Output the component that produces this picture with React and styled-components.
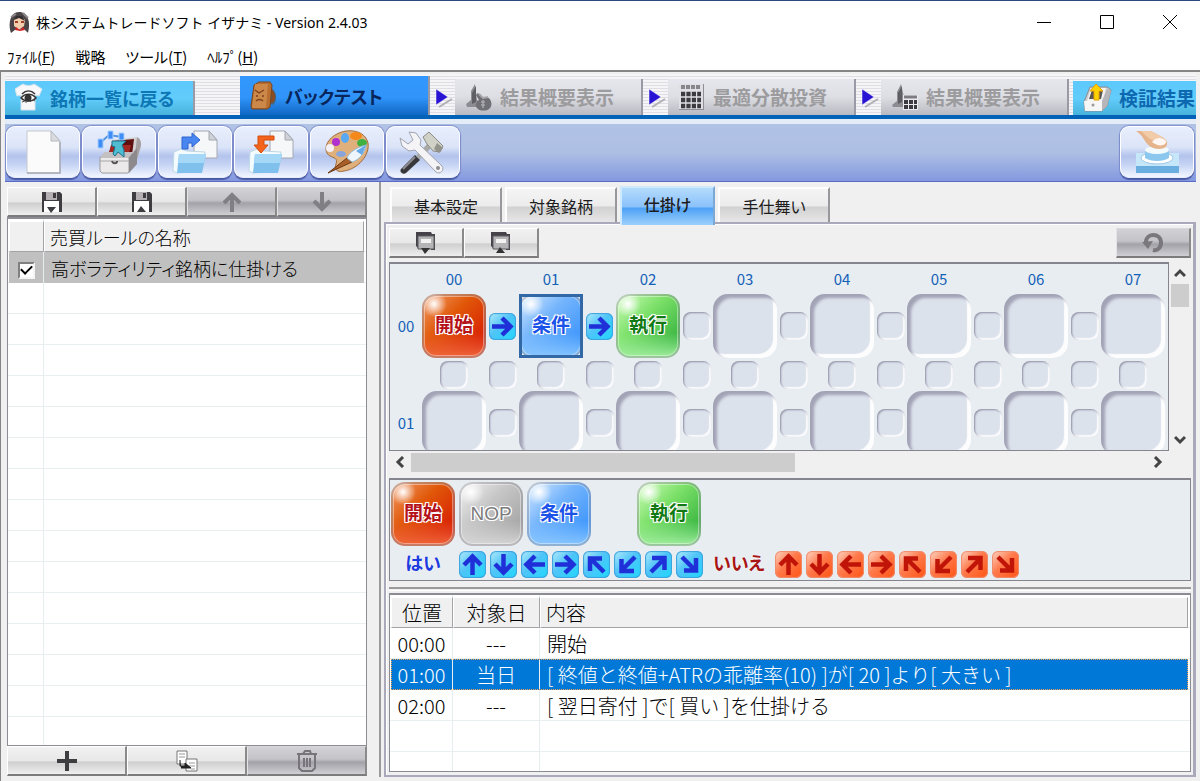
import React, { useState } from 'react'
import styled, { createGlobalStyle, css } from 'styled-components'

const GlobalStyle = createGlobalStyle`
  * {
    box-sizing: border-box;
  }

  body {
    margin: 0;
    background: #f0f0f0;
    color: #000;
    font-family: 'Liberation Sans', 'Noto Sans CJK JP', sans-serif;
    font-feature-settings: 'palt';
  }

  button {
    font: inherit;
    font-feature-settings: inherit;
    color: inherit;
    margin: 0;
    padding: 0;
    border: 0;
    background: none;
  }
`

const Window = styled.div`
  display: flex;
  flex-direction: column;
  min-height: 100vh;
  border-top: 1px solid #2c4a80;
`

const TitleBar = styled.header`
  display: flex;
  align-items: center;
  height: 42px;
  padding-left: 8px;
  background: #fff;
`

const Title = styled.h1`
  flex: 1;
  margin: 0 0 0 5px;
  font: 400 14px 'Noto Sans', 'Noto Sans CJK JP', sans-serif;
  white-space: nowrap;
`

const WindowButton = styled.button`
  display: flex;
  align-items: center;
  justify-content: center;
  width: 63px;
  height: 42px;

  &:last-child {
    margin-right: -1px;
  }
`

const MenuBar = styled.nav`
  display: flex;
  align-items: center;
  gap: 20px;
  height: 27px;
  padding-left: 7px;
  background: #fff;
  font-size: 15px;
  font-family: 'Noto Sans CJK JP', sans-serif;
`

const Frame = styled.div`
  display: flex;
  flex-direction: column;
  flex: 1;
  border-top: 2px solid #858585;
  border-left: 1px solid #858585;
  padding: 2px 4px 4px;
`

const StepBar = styled.nav`
  display: flex;
  align-items: flex-end;
  height: 45px;
  overflow: hidden;
  border-bottom: 4px solid #0262b8;
  background: repeating-linear-gradient(#f5f5f8 0 2px, #dedee4 2px 3px);
`

const stepTones = {
  cyan: css`
    width: 190px;
    height: 34px;
    color: #0d76b5;
    background: linear-gradient(#5cc8fc, #62ccfb 50%, #48b4dc);
    font-size: 18px;
  `,
  last: css`
    flex: 1;
    height: 34px;
    margin-left: 4px;
    border-right: 0;
    color: #0d68b0;
    background: linear-gradient(#5cc8fc, #62ccfb 50%, #48b4dc);
  `,
  active: css`
    width: 190px;
    height: 39px;
    color: #09265c;
    background: linear-gradient(#3398fe, #3094fa 55%, #1067c4);
    font-size: 18px;
  `,
  idle: css`
    width: 188px;
    height: 36px;
    color: #9c9c9e;
    background: linear-gradient(#e6e6ee, #dddde4 50%, #b9b9c1);
  `,
}

const Step = styled.button`
  display: flex;
  align-items: center;
  flex: none;
  gap: 7px;
  padding-left: 10px;
  border-right: 2px solid #9a9aa6;
  font-weight: 700;
  font-size: 19px;
  line-height: 28px;
  white-space: nowrap;
  font-family: 'Noto Sans CJK JP', sans-serif;
  ${props => stepTones[props.$tone]}
`

const StepGap = styled.div`
  flex: none;
  width: 45px;
`

const StepArrow = styled.svg`
  flex: none;
  width: 25px;
  height: 34px;
`

const Toolbar = styled.div`
  display: flex;
  align-items: flex-start;
  gap: 2px;
  height: 63px;
  padding: 2px 2px 0 1px;
  border-top: 5px solid #e4ecf8;
  border-bottom: 1px solid #5a6cc4;
  background: linear-gradient(#b1c3e5, #aebfe4 50%, #8398df);
  background-clip: padding-box;
`

const ToolButton = styled.button`
  display: flex;
  align-items: center;
  justify-content: center;
  width: 74px;
  height: 52px;
  border: 1px solid #fff;
  border-bottom-color: #e2eafd;
  border-radius: 9px;
  background: linear-gradient(
    #e8eefc,
    #dbe4f8 40%,
    #b3c3ec 58%,
    #c5d3f4 75%,
    #f2f6ff
  );
  box-shadow: 0 2px 1px #4a5aa4, 0 0 1px 1px #8090d0;

  ${props => props.$end && 'margin-left: auto;'}
`

const Body = styled.main`
  display: flex;
  flex: 1;
`

const RulePanel = styled.section`
  display: flex;
  flex-direction: column;
  width: 376px;
  padding: 5px 12px 1px 2px;
  border-right: 2px solid #9a9a9c;
`

const ButtonRow = styled.div`
  display: flex;
  justify-content: ${props => (props.$spread ? 'space-between' : 'normal')};
`

const SmallButton = styled.button`
  display: flex;
  align-items: center;
  justify-content: center;
  flex: ${props => (props.$width ? 'none' : 1)};
  width: ${props => (props.$width ? `${props.$width}px` : 'auto')};
  height: 30px;
  border: 1px solid #fff;
  border-right: 2px solid #8a8a8a;
  border-bottom: 2px solid #7c7c7c;
  background: linear-gradient(#f1f1f1, #e8e8e8 50%, #cfcfcf 56%, #efefef);

  &:disabled {
    border-top-color: #d8d8dc;
    border-left-color: #e4e4e8;
    background: linear-gradient(#d2d2d6, #c4c3c8 45%, #a3a2a8 56%, #cfcfd4);
  }
`

const ListBox = styled.div`
  flex: 1;
  padding: 2px 2px 0 1px;
  border: 1px solid #8c8c94;
  border-top-width: 2px;
  background: ${props => `
    linear-gradient(#e8edf0, #e8edf0) ${props.$columns[0]}px 0 / 1px 100% no-repeat,
    linear-gradient(#e8edf0, #e8edf0) ${props.$columns[1]}px 0 / 1px 100% no-repeat,
    repeating-linear-gradient(#fff 0 30px, #e9eef0 30px 31px) 0 2px,
    #fff`};
`

const Table = styled.table`
  width: 100%;
  border-collapse: separate;
  border-spacing: 0;
  table-layout: fixed;
  font-family: 'Noto Sans CJK JP', sans-serif;
  font-size: ${props => (props.$wide ? 20 : 18)}px;
  font-feature-settings: ${props => (props.$wide ? 'normal' : "'palt'")};
  font-weight: 300;

  td,
  th {
    height: 31px;
    padding: 0 0 0 7px;
    font-weight: inherit;
    line-height: 28px;
    text-align: left;
    white-space: nowrap;
  }

  th {
    padding-left: 5px;
    border: 1px solid;
    border-color: #fff #a4a4a8 #a4a4a8 #fff;
    background: #f0f0f0;
  }

  th:not(:last-child),
  td:not(:last-child) {
    padding: 0;
    text-align: center;
  }

  td:not(:last-child) {
    border-right: 1px solid #e8edf0;
  }
`

const Col = styled.col`
  width: ${props => props.$width}px;
`

const RuleRow = styled.tr`
  background: ${props => (props.$selected ? '#c0c0c0' : 'none')};
`

const ActionRow = styled.tr`
  ${props =>
    props.$selected &&
    `
      color: #fff;
      background: #0078d7;
      outline: 1px dotted #f0a050;
      outline-offset: -1px;
    `}
`

const Checkbox = styled.input`
  appearance: none;
  display: inline-flex;
  align-items: center;
  justify-content: center;
  width: 17px;
  height: 17px;
  margin: 0;
  border: 2px solid;
  border-color: #808080 #f4f4f4 #f4f4f4 #808080;
  background: #fff;
  vertical-align: middle;

  &:checked::after {
    content: '';
    width: 9px;
    height: 5px;
    margin-bottom: 4px;
    border: solid #000;
    border-width: 0 0 2px 2px;
    transform: rotate(-45deg);
  }
`

const StrategyPanel = styled.section`
  display: flex;
  flex-direction: column;
  flex: 1;
  min-width: 0;
  padding: 4px 0 0 3px;
`

const Tabs = styled.div`
  display: flex;
  align-items: flex-end;
  gap: 3px;
  height: 36px;
  padding-left: 6px;
`

const Tab = styled.button`
  width: 112px;
  height: 35px;
  padding-top: 5px;
  border: 2px solid;
  border-color: #fdfdfd #98989c #98989c #fdfdfd;
  border-bottom-width: 0;
  background: linear-gradient(#f4f4f4, #ececec 50%, #d2d2d2 56%, #e6e6e6);
  color: #1c1c1c;
  font-size: 16px;
  line-height: 26px;

  &[aria-selected='true'] {
    z-index: 1;
    width: 95px;
    height: 39px;
    margin-bottom: -3px;
    padding-bottom: 6px;
    border-color: #cfeafc #7ca8d8 #b8d8f8 #cfeafc;
    background: linear-gradient(#b4dbfc, #8bc2fb 50%, #4ea2f6 55%, #9cd0fc);
    font-weight: 500;
  }
`

const TabBody = styled.div`
  display: flex;
  flex-direction: column;
  flex: 1;
  padding: 4px 2px 3px 3px;
  border: 2px solid #a9a9bb;
  border-right-width: 3px;
  box-shadow: inset 1px 1px 0 #fff;
`

const Scroller = styled.div`
  display: grid;
  grid-template-columns: minmax(0, 1fr) 22px;
  grid-template-rows: 189px 22px;
  margin-top: 4px;
`

const Canvas = styled.div`
  overflow: hidden;
  border: 1px solid #85858f;
  border-top-width: 2px;
  background: #e8edf1;
`

const Board = styled.div`
  display: grid;
  grid-template-columns: 32px repeat(8, 64px 33px);
  grid-template-rows: 30px 64px 33px 64px;
  place-items: center;
`

const AxisLabel = styled.span`
  grid-column: ${props => props.$col};
  grid-row: ${props => props.$row};
  color: #1461b8;
  font-family: 'Noto Sans CJK JP', sans-serif;
  font-size: 15px;
  line-height: 22px;
`

const Slot = styled.button`
  grid-column: ${props => props.$col};
  grid-row: ${props => props.$row};
  background: #dce2ec;

  ${props =>
    props.$small
      ? `
      width: 28px;
      height: 28px;
      border-radius: 8px;
      box-shadow: inset 1px 1px 2px #8f8fa4, inset -2px -2px 1px #fbfbfd;
    `
      : `
      width: 64px;
      height: 64px;
      border-radius: 15px;
      box-shadow: inset 4px 4px 3px #a3a3b6, inset -4px -4px 1px #fdfdfe;
    `}
`

const nodeTones = {
  start: ['#b5121a', '#f3a070', '#e05808', '#d81c04', '#f0683c'],
  nop: ['#7c7c7e', '#f4f4f4', '#c6c6c6', '#a4a4a4', '#d8d8d8'],
  condition: ['#1b52e8', '#d8ebff', '#74b4fc', '#3a94fc', '#8cc8ff'],
  execute: ['#127a14', '#d2ffc0', '#7ce068', '#36b440', '#a4f0a0'],
}

const Node = styled.button`
  position: relative;
  grid-column: ${props => props.$col};
  grid-row: ${props => props.$row};
  width: 64px;
  height: 64px;
  border: 2px solid rgba(150, 150, 160, 0.45);
  border-radius: 14px;
  background: ${({ $kind }) => {
    const [, shine, base, deep, glow] = nodeTones[$kind]
    return `
      radial-gradient(circle at 12px 10px, #fff 0, transparent 13px),
      linear-gradient(to top, ${glow}, transparent 40%),
      linear-gradient(135deg, ${shine}, ${base} 40%, ${deep} 85%)`
  }};
  background-origin: border-box;
  box-shadow: inset 0 0 0 1px rgba(255, 255, 255, 0.4);
  color: ${props => nodeTones[props.$kind][0]};
  font-size: 19px;
  font-weight: ${props => (props.$kind === 'nop' ? 400 : 700)};
  line-height: 24px;
  text-shadow: -1px -1px 0 #fff, 1px -1px 0 #fff, -1px 1px 0 #fff,
    1px 1px 0 #fff, 0 0 2px #fff;

  ${props =>
    props.$selected &&
    `
      &::before {
        content: '';
        position: absolute;
        inset: -2px;
        border: 3px solid #3268a6;
      }
    `}
`

const ArrowButton = styled.button`
  grid-column: ${props => props.$col};
  grid-row: ${props => props.$row};
  display: flex;
  align-items: center;
  justify-content: center;
  width: 27px;
  height: 27px;
  border-radius: 6px;
  color: ${props => (props.$no ? '#c01408' : '#2030d8')};
  background: ${props =>
    props.$no
      ? 'linear-gradient(135deg, #ffd8c8, #ff7a4c 45%, #ff5a1c 90%)'
      : 'linear-gradient(135deg, #b4ecfc, #50c4f8 45%, #28d4fc 90%)'};
  box-shadow: inset 0 0 1px 1px
    ${props => (props.$no ? '#f08c6c' : '#3ca0dc')};
`

const ScrollBar = styled.div`
  display: flex;
  flex-direction: ${props => (props.$vertical ? 'column' : 'row')};
  align-items: center;
`

const ScrollThumb = styled.div`
  ${props =>
    props.$vertical
      ? 'width: 18px; height: 23px; margin-bottom: auto;'
      : 'width: 384px; height: 19px; margin-right: auto;'}
  background: #cdcdcd;
`

const ScrollButton = styled.button`
  display: flex;
  align-items: center;
  justify-content: center;
  width: 22px;
  height: 22px;
`

const Palette = styled.div`
  display: flex;
  flex-direction: column;
  gap: 5px;
  height: 103px;
  margin-top: 5px;
  padding: 2px 1px;
  border: 1px solid #85858f;
  border-top-width: 2px;
  background: #e8edf1;
`

const PaletteRow = styled.div`
  display: flex;
  align-items: center;
  gap: 4px;
`

const PaletteGap = styled.div`
  width: 38px;
`

const BranchLabel = styled.span`
  width: 64px;
  color: ${props => (props.$no ? '#a81414' : '#1c3ce0')};
  font-size: 18px;
  font-weight: 700;
  line-height: 27px;
  text-align: center;
  text-shadow: 0 0 2px #fff;
`

const Splitter = styled.div`
  height: 4px;
  margin: 6px 0 2px;
  border-top: 2px solid #9b9b9b;
  border-bottom: 1px solid #fff;
`

const AppIcon = () => (
  <svg width="23" height="23" viewBox="0 0 23 23">
    <path d="M3 22C0 13 2 1 11 1s12 10 9 21l-4-3H7z" fill="#4b4548" />
    <path d="M3 6l5-3M15 2l5 5" stroke="#8e8a8c" strokeWidth="2" />
    <path d="M6 9c2-3 9-3 11 0l-1 6-4 3H10l-4-3z" fill="#f4cfae" />
    <path d="M6 9l5-2 6 3-3-5H8z" fill="#332e30" />
    <path d="M7 11h3M13 11h3" stroke="#a04028" strokeWidth="2" />
    <path d="M4 22l5-5 3 2 3-2 5 5z" fill="#fff" />
    <path d="M8 16l4 3 3-3 2 3-5 1-5-1z" fill="#d42424" />
  </svg>
)

const ShirtIcon = () => (
  <svg width="28" height="30" viewBox="0 0 28 30">
    <path
      d="M8 1c3 2 8 2 11 0l8 5-3 7-4-1v15H6V12l-4 1-2-7z"
      fill="#f8f8fa"
      stroke="#d4e4ec"
    />
    <path
      d="M6 15c4-5 11-5 15 0-4 4-11 4-15 0zM7 11c4-4 9-4 13 0"
      fill="#fff"
      stroke="#333"
      strokeWidth="1.5"
    />
    <circle cx="13" cy="15" r="3.5" fill="#333" />
    <path d="M7 19l3-1M11 20v-2M16 19l-1-1M20 18l-2-1" stroke="#555" />
  </svg>
)

const BagIcon = () => (
  <svg width="28" height="30" viewBox="0 0 28 30">
    <path d="M20 7c7 2 8 12 3 17l-4-2z" fill="#4c6478" />
    <path d="M20 9c4 3 5 9 1 12" stroke="#8a4c20" strokeWidth="3" fill="none" />
    <path
      d="M4 4l5-3h11l2 3-2 22-3 2H2l-1-3z"
      fill="#b86e30"
      stroke="#7c4418"
    />
    <path d="M5 3h13l-2 24H2z" fill="#cc8848" />
    <path
      d="M5 9l4 3 5-3M6 15h2M12 15h2M6 20c2-2 5-2 7 0"
      stroke="#7a421c"
      fill="none"
      strokeWidth="1.4"
    />
  </svg>
)

const ReportIcon = () => (
  <svg width="28" height="28" viewBox="0 0 28 28">
    <path d="M1 21l5-4V8l4-7 2 16 6 4-3 3H2z" fill="#8c8c92" />
    <path d="M7 10l4-7v16l-4 2z" fill="#5e5e64" />
    <path
      d="M13 10l4 4h5c5 2 6 9 2 12-2 2-9 2-11 0-4-3-2-7 1-9l-3-5z"
      fill="#6f6f75"
    />
    <path d="M14 11l4 4 5-1" stroke="#a8a8ac" strokeWidth="2" fill="none" />
    <path d="M16 19h4M16 22h4M18 17v8" stroke="#a8a8ae" strokeWidth="1.5" />
  </svg>
)

const CalcIcon = () => (
  <svg width="28" height="28" viewBox="0 0 28 28">
    <rect x="1" y="1" width="25" height="26" fill="#8f8f95" />
    <rect x="1" y="1" width="24" height="25" fill="#e0e0e4" />
    <path d="M3 4h20" stroke="#86868c" strokeWidth="4" strokeDasharray="4 1" />
    <path
      d="M3 11h20M3 17h20M3 23h20"
      stroke="#3b3b41"
      strokeWidth="4.5"
      strokeDasharray="4.2 1.2"
    />
  </svg>
)

const ReportCalcIcon = () => (
  <svg width="28" height="28" viewBox="0 0 28 28">
    <path d="M1 22l5-4V9l4-8 3 13v10H2z" fill="#8c8c92" />
    <path d="M7 10l4-7v16l-4 2z" fill="#5e5e64" />
    <rect x="12" y="12" width="15" height="15" fill="#ececf0" />
    <path d="M13 14h13" stroke="#7c7c82" strokeWidth="3" />
    <path
      d="M13 19h13M13 24h13"
      stroke="#3b3b41"
      strokeWidth="4"
      strokeDasharray="4 1"
    />
  </svg>
)

const BoxUpIcon = () => (
  <svg width="29" height="29" viewBox="0 0 29 29">
    <path d="M7 3h17l4 3-4 16-5 5H2l-1-9z" fill="#cfcfd2" stroke="#8c8c90" />
    <path d="M8 4h15l-3 13H4z" fill="#f2f2f2" />
    <path d="M9 6h11l-2 9H6z" fill="#5a5650" />
    <path d="M1 17h18v10H2z" fill="#f6f6f6" />
    <path d="M19 17l5-12 4 2-4 15-5 5z" fill="#b6b6ba" />
    <circle cx="10" cy="21" r="1.5" fill="#999" />
    <path d="M13 0l7 7h-4v9h-5V7H7z" fill="#ffd200" stroke="#e8a000" />
  </svg>
)

const PageIcon = () => (
  <svg width="48" height="44" viewBox="0 0 48 44">
    <path d="M8 1h24l9 10v32H8z" fill="#fbfbfb" stroke="#c4c8d0" />
    <path d="M32 1v10h9z" fill="#dcdcde" stroke="#b4b8c0" />
    <path d="M8 43h33V12" fill="none" stroke="#a8aab4" strokeWidth="1.5" />
  </svg>
)

const ChestIcon = () => (
  <svg width="48" height="44" viewBox="0 0 48 44">
    <path d="M17 10l25-3c4 2 5 7 3 12l-4 14H13z" fill="#d2cfd0" />
    <path d="M42 7c4 2 5 7 3 12l-4 14-1-8z" fill="#a4a0a2" />
    <path d="M18 11l21-2-2 16H13z" fill="#5e1010" />
    <path d="M16 15h20l-2 8H14z" fill="#a42820" />
    <path d="M5 27h29v15l-1 1H7l-2-2z" fill="#ebe9ea" stroke="#9c9a9c" />
    <path d="M34 27l8-9v16l-8 9z" fill="#8d8a8d" />
    <path d="M5 27l5-5h29l-5 5z" fill="#c4c0c2" />
    <path d="M5 31h29" stroke="#a8a4a8" />
    <path d="M17 31c1 3 5 3 5 0" fill="none" stroke="#555" strokeWidth="2" />
    <path d="M5 13l9-8 13 2" stroke="#5494e0" strokeWidth="2" fill="none" />
    <path
      d="M3 9h5v9H3zM13 1h5v8h-5zM24 3h5v7h-5z"
      fill="#3e8cf4"
      stroke="#a8d0ff"
    />
    <path
      d="M17 11h14l-4 4 2 5v7l-6-5-3 4-2-2 2-7-3-1z"
      fill="#50bcd0"
      stroke="#1e7090"
    />
  </svg>
)

const FolderIcon = ({ out }) => (
  <svg width="48" height="44" viewBox="0 0 48 44">
    <path d="M23 1h15l8 9v18H23z" fill="#f6f7f8" stroke="#a4a8b0" />
    <path d="M38 1v9h8z" fill="#cfd2d6" stroke="#a4a8b0" />
    <path d="M3 22l7-3 6 2 18 1-3 19-25 2-4-2z" fill="#f4fbfe" stroke="#c0d8e4" />
    <path d="M8 24h27l-4 19H6z" fill="#7fc0ec" />
    <path d="M8 24h27l-2 9H7z" fill="#a4d8f6" />
    {out ? (
      <path d="M27 6v4H17v5h4l-7 8-7-8h4V6z" fill="#f4641c" stroke="#d04c0c" />
    ) : (
      <path d="M11 19V7h10V3l8 7-8 7v-4h-4v6z" fill="#4a86f0" stroke="#2c64d0" />
    )}
  </svg>
)

const PaletteIcon = () => (
  <svg width="48" height="44" viewBox="0 0 48 44">
    <path
      d="M14 4C25-2 42 0 45 13c2 12-10 26-24 28-7 2-10-2-8-7 2-6-2-6-6-8C0 22 2 10 14 4z"
      fill="#e0b07c"
      stroke="#a06c3c"
    />
    <ellipse cx="18" cy="24" rx="5" ry="3" fill="#88a4dc" />
    <circle cx="13" cy="12" r="4" fill="#b030d0" />
    <circle cx="7" cy="18" r="4" fill="#f4f0f4" />
    <ellipse cx="22" cy="8" rx="4" ry="5" fill="#58a8f4" />
    <ellipse cx="33" cy="6" rx="6" ry="4" fill="#f48818" />
    <ellipse cx="39" cy="13" rx="5" ry="4" fill="#40b040" />
    <path d="M5 43l19-15 5 4z" fill="#a86028" stroke="#6c3814" />
    <path d="M24 28c2-6 11-11 19-13-1 8-7 15-14 17z" fill="#eef6fc" stroke="#94bcdc" />
    <path d="M33 21l10-6-4 10z" fill="#64a8e8" />
  </svg>
)

const ToolsIcon = () => (
  <svg width="48" height="44" viewBox="0 0 48 44">
    <path d="M2 39l14-14 5 5L7 43c-3 2-7-1-5-4z" fill="#38383a" />
    <path d="M4 39l12-12" stroke="#8c8c90" strokeWidth="2" />
    <path d="M17 26l13-14 4 4-13 13z" fill="#a8a8a4" />
    <path
      d="M24 7l6-5 14 14-3 6-7-1-6-7z"
      fill="#d0d2c8"
      stroke="#8c8c84"
    />
    <path d="M38 13l6 5-4 5-5-4z" fill="#92948c" />
    <path
      d="M10 2l7 1 5 7-1 5 22 21c3 4-2 9-6 6L16 20l-6 1-7-5-2-8 8 6 5-4z"
      fill="#f4f4f6"
      stroke="#a0a4ae"
    />
    <circle cx="39" cy="38" r="2" fill="#8c8c90" />
  </svg>
)

const PushIcon = () => (
  <svg width="48" height="44" viewBox="0 0 48 44">
    <path d="M3 23h43v20H3z" fill="#c6e6fa" />
    <path d="M3 36h43v7H3z" fill="#6aaee0" />
    <ellipse cx="24" cy="28" rx="16" ry="6" fill="#fff" stroke="#a0c8e4" />
    <path d="M12 20h24v8c-6 4-18 4-24 0z" fill="#8cc8ee" />
    <ellipse cx="24" cy="20" rx="12" ry="4" fill="#f2fafe" />
    <path
      d="M3 1h15c5 3 11 5 15 9 3 5 0 9-7 9-6 0-11-3-14-8C10 8 8 4 3 1z"
      fill="#e6b48c"
    />
    <path d="M8 1h10c4 3 9 4 12 7l-10 2C14 8 12 4 8 1z" fill="#f2cba8" />
    <path d="M19 12c3-5 11-5 14-1 1 4-7 7-14 1z" fill="#fdf6f2" />
  </svg>
)

const SaveIcon = ({ up }) => (
  <svg width="22" height="23" viewBox="0 0 22 23">
    <path d="M1 2h18l2 2v18h-5V11H5v11H1z" fill="#3e3c40" />
    <path d="M5 2h11v8H5z" fill="#b4b0b4" />
    <path d="M12 3h3v5h-3z" fill="#3e3c40" />
    <path d="M3 11h15v11H3z" fill="#fff" />
    <path d={up ? 'M6 22h9l-5-6z' : 'M6 17h9l-5 6z'} fill="#3e3c40" />
  </svg>
)

const ModuleIcon = ({ up }) => (
  <svg width="22" height="23" viewBox="0 0 22 23">
    <path d="M1 1h15l1 2h3v16h-4v-1H4l-3-3z" fill="#444248" />
    <path d="M3 5h16v13H3z" fill="#b4b4b6" stroke="#5c5a60" />
    <path d="M6 8h10v4H6z" fill="#f2f2f2" />
    <path d={up ? 'M6 22h9l-5-6z' : 'M6 17h9l-5 6z'} fill="#333" />
  </svg>
)

const FadedArrowIcon = ({ down }) => (
  <svg width="22" height="22" viewBox="0 0 22 22">
    <path
      d={down ? 'M11 1v17M3 10l8 8 8-8' : 'M11 21V4M3 12l8-8 8 8'}
      fill="none"
      stroke="#808084"
      strokeWidth="4"
    />
  </svg>
)

const PlusIcon = () => (
  <svg width="22" height="22" viewBox="0 0 22 22">
    <path d="M11 1v20M1 11h20" stroke="#3e3e40" strokeWidth="4" />
  </svg>
)

const CopyIcon = () => (
  <svg width="22" height="22" viewBox="0 0 22 22">
    <path d="M1 1h10v13H1z" fill="#fff" stroke="#777" />
    <path d="M3 4h6M3 7h6" stroke="#999" />
    <path d="M10 9h11v12H10z" fill="#fff" stroke="#777" />
    <path d="M13 13h6M13 16h6M15 19h4" stroke="#999" />
    <path d="M4 10v6h5v-3l6 5H5" fill="#222" stroke="#222" />
  </svg>
)

const TrashIcon = () => (
  <svg width="22" height="24" viewBox="0 0 22 24">
    <path
      d="M1 5h20M7 5l2-3h5l1 3M3 6v13l3 3h10l3-3V6M8 9v9M11 9v9M14 9v9"
      fill="none"
      stroke="#77757a"
      strokeWidth="2"
    />
  </svg>
)

const UndoIcon = () => (
  <svg width="22" height="22" viewBox="0 0 22 22">
    <path
      d="M4 10c0-9 15-10 15 1 0 5-4 8-8 7"
      fill="none"
      stroke="#7a787c"
      strokeWidth="4"
    />
    <path d="M0 10l11-1-5 8z" fill="#7a787c" />
  </svg>
)

const rotations = {
  up: -90,
  down: 90,
  left: 180,
  right: 0,
  'up-left': 180,
  'down-left': 90,
  'up-right': -90,
  'down-right': 0,
}

const directions = Object.keys(rotations)

const ArrowGlyph = ({ direction }) => (
  <svg width="23" height="23" viewBox="0 0 23 23">
    <path
      d={
        direction.includes('-')
          ? 'M4 4l13 13M6 17.5h12V5'
          : 'M1 11.5h18M11 3l8.5 8.5-8.5 8.5'
      }
      fill="none"
      stroke="currentColor"
      strokeWidth="4.5"
      transform={`rotate(${rotations[direction]} 11.5 11.5)`}
    />
  </svg>
)

const Chevron = ({ d }) => (
  <svg width="12" height="12" viewBox="0 0 12 12">
    <path d={d} fill="none" stroke="#444" strokeWidth="3" />
  </svg>
)

const Separator = () => (
  <StepArrow viewBox="0 0 25 34">
    <path d="M9 26l13-8" fill="none" stroke="#b0b0b4" strokeWidth="2" />
    <path d="M6 8l12 8-12 8z" fill="#2a14d4" stroke="#fff" strokeWidth="0.5" />
  </StepArrow>
)

const tabs = ['基本設定', '対象銘柄', '仕掛け', '手仕舞い']

const nodes = [
  { col: 0, kind: 'start', label: '開始' },
  { col: 1, kind: 'condition', label: '条件', selected: true },
  { col: 2, kind: 'execute', label: '執行' },
]

const actions = [
  { position: '00:00', day: '---', content: '開始' },
  {
    position: '01:00',
    day: '当日',
    content: '[ 終値と終値+ATRの乖離率(10) ]が[ 20 ]より[ 大きい ]',
  },
  {
    position: '02:00',
    day: '---',
    content: '[ 翌日寄付 ]で[ 買い ]を仕掛ける',
  },
]

const columns = [0, 1, 2, 3, 4, 5, 6, 7]
const pad = n => String(n).padStart(2, '0')

const FlowBoard = () => (
  <Board>
    {columns.map(c => (
      <AxisLabel key={c} $col={c * 2 + 2} $row={1}>
        {pad(c)}
      </AxisLabel>
    ))}
    {[0, 1].map(r => (
      <React.Fragment key={r}>
        <AxisLabel $col={1} $row={r * 2 + 2}>
          {pad(r)}
        </AxisLabel>
        {columns.map(c => {
          const node = r === 0 && nodes.find(n => n.col === c)
          const place = { $col: c * 2 + 2, $row: r * 2 + 2 }
          return node ? (
            <Node
              key={c}
              {...place}
              $kind={node.kind}
              $selected={node.selected}
            >
              {node.label}
            </Node>
          ) : (
            <Slot key={c} {...place} aria-label={`${pad(c)}:${pad(r)}`} />
          )
        })}
        {columns.slice(0, -1).map(c => {
          const place = { $col: c * 2 + 3, $row: r * 2 + 2 }
          return r === 0 && c < 2 ? (
            <ArrowButton key={c} {...place} aria-label="はい">
              <ArrowGlyph direction="right" />
            </ArrowButton>
          ) : (
            <Slot key={c} {...place} $small aria-label="矢印" />
          )
        })}
      </React.Fragment>
    ))}
    {Array.from({ length: 15 }, (_, i) => (
      <Slot key={i} $col={i + 2} $row={3} $small aria-label="矢印" />
    ))}
  </Board>
)

const App = () => {
  const [tab, setTab] = useState('仕掛け')
  const [selected, setSelected] = useState(1)
  const [enabled, setEnabled] = useState(true)

  return (
    <Window>
      <GlobalStyle />
      <TitleBar>
        <AppIcon />
        <Title>株システムトレードソフト イザナミ - Version 2.4.03</Title>
        <WindowButton aria-label="最小化">
          <svg width="14" height="14" viewBox="0 0 14 14">
            <path d="M0 7.5h14" stroke="#000" />
          </svg>
        </WindowButton>
        <WindowButton aria-label="最大化">
          <svg width="14" height="14" viewBox="0 0 14 14">
            <path d="M.5.5h13v13H.5z" fill="none" stroke="#000" />
          </svg>
        </WindowButton>
        <WindowButton aria-label="閉じる">
          <svg width="14" height="14" viewBox="0 0 14 14">
            <path d="M0 0l14 14M14 0L0 14" stroke="#000" />
          </svg>
        </WindowButton>
      </TitleBar>
      <MenuBar>
        <button>
          ﾌｧｲﾙ(<u>F</u>)
        </button>
        <button>戦略</button>
        <button>
          ツール(<u>T</u>)
        </button>
        <button>
          ﾍﾙﾌﾟ(<u>H</u>)
        </button>
      </MenuBar>

      <Frame>
        <StepBar>
          <Step $tone="cyan">
            <ShirtIcon />
            銘柄一覧に戻る
          </Step>
          <StepGap />
          <Step $tone="active">
            <BagIcon />
            バックテスト
          </Step>
          <Separator />
          <Step $tone="idle">
            <ReportIcon />
            結果概要表示
          </Step>
          <Separator />
          <Step $tone="idle">
            <CalcIcon />
            最適分散投資
          </Step>
          <Separator />
          <Step $tone="idle">
            <ReportCalcIcon />
            結果概要表示
          </Step>
          <Step $tone="last">
            <BoxUpIcon />
            検証結果
          </Step>
        </StepBar>

        <Toolbar>
          <ToolButton aria-label="新規">
            <PageIcon />
          </ToolButton>
          <ToolButton aria-label="戦略を選ぶ">
            <ChestIcon />
          </ToolButton>
          <ToolButton aria-label="保存">
            <FolderIcon />
          </ToolButton>
          <ToolButton aria-label="開く">
            <FolderIcon out />
          </ToolButton>
          <ToolButton aria-label="配色">
            <PaletteIcon />
          </ToolButton>
          <ToolButton aria-label="設定">
            <ToolsIcon />
          </ToolButton>
          <ToolButton $end aria-label="実行">
            <PushIcon />
          </ToolButton>
        </Toolbar>

        <Body>
          <RulePanel>
            <ButtonRow>
              <SmallButton aria-label="ルールを保存">
                <SaveIcon />
              </SmallButton>
              <SmallButton aria-label="ルールを読込">
                <SaveIcon up />
              </SmallButton>
              <SmallButton disabled aria-label="上へ">
                <FadedArrowIcon />
              </SmallButton>
              <SmallButton disabled aria-label="下へ">
                <FadedArrowIcon down />
              </SmallButton>
            </ButtonRow>
            <ListBox $columns={[35, 35]}>
              <Table>
                <colgroup>
                  <Col $width={35} />
                  <col />
                </colgroup>
                <thead>
                  <tr>
                    <th />
                    <th>売買ルールの名称</th>
                  </tr>
                </thead>
                <tbody>
                  <RuleRow $selected>
                    <td>
                      <Checkbox
                        id="rule-1"
                        type="checkbox"
                        checked={enabled}
                        onChange={e => setEnabled(e.target.checked)}
                      />
                    </td>
                    <td>
                      <label htmlFor="rule-1">
                        高ボラティリティ銘柄に仕掛ける
                      </label>
                    </td>
                  </RuleRow>
                </tbody>
              </Table>
            </ListBox>
            <ButtonRow>
              <SmallButton aria-label="追加">
                <PlusIcon />
              </SmallButton>
              <SmallButton aria-label="複製">
                <CopyIcon />
              </SmallButton>
              <SmallButton disabled aria-label="削除">
                <TrashIcon />
              </SmallButton>
            </ButtonRow>
          </RulePanel>

          <StrategyPanel>
            <Tabs role="tablist">
              {tabs.map(name => (
                <Tab
                  key={name}
                  role="tab"
                  aria-selected={name === tab}
                  onClick={() => setTab(name)}
                >
                  {name}
                </Tab>
              ))}
            </Tabs>
            <TabBody>
              <ButtonRow $spread>
                <ButtonRow>
                  <SmallButton $width={75} aria-label="保存">
                    <ModuleIcon />
                  </SmallButton>
                  <SmallButton $width={75} aria-label="読込">
                    <ModuleIcon up />
                  </SmallButton>
                </ButtonRow>
                <SmallButton $width={75} disabled aria-label="元に戻す">
                  <UndoIcon />
                </SmallButton>
              </ButtonRow>

              <Scroller>
                <Canvas>
                  <FlowBoard />
                </Canvas>
                <ScrollBar $vertical>
                  <ScrollButton aria-label="上へスクロール">
                    <Chevron d="M1 9l5-5 5 5" />
                  </ScrollButton>
                  <ScrollThumb $vertical />
                  <ScrollButton aria-label="下へスクロール">
                    <Chevron d="M1 3l5 5 5-5" />
                  </ScrollButton>
                </ScrollBar>
                <ScrollBar>
                  <ScrollButton aria-label="左へスクロール">
                    <Chevron d="M9 1L4 6l5 5" />
                  </ScrollButton>
                  <ScrollThumb />
                  <ScrollButton aria-label="右へスクロール">
                    <Chevron d="M3 1l5 5-5 5" />
                  </ScrollButton>
                </ScrollBar>
              </Scroller>

              <Palette>
                <PaletteRow>
                  <Node $kind="start">開始</Node>
                  <Node $kind="nop">NOP</Node>
                  <Node $kind="condition">条件</Node>
                  <PaletteGap />
                  <Node $kind="execute">執行</Node>
                </PaletteRow>
                <PaletteRow>
                  <BranchLabel>はい</BranchLabel>
                  {directions.map(d => (
                    <ArrowButton key={d} aria-label={`はい ${d}`}>
                      <ArrowGlyph direction={d} />
                    </ArrowButton>
                  ))}
                  <BranchLabel $no>いいえ</BranchLabel>
                  {directions.map(d => (
                    <ArrowButton key={d} $no aria-label={`いいえ ${d}`}>
                      <ArrowGlyph direction={d} />
                    </ArrowButton>
                  ))}
                </PaletteRow>
              </Palette>

              <Splitter />

              <ListBox $columns={[62, 149]}>
                <Table $wide>
                  <colgroup>
                    <Col $width={62} />
                    <Col $width={87} />
                    <col />
                  </colgroup>
                  <thead>
                    <tr>
                      <th>位置</th>
                      <th>対象日</th>
                      <th>内容</th>
                    </tr>
                  </thead>
                  <tbody>
                    {actions.map((action, index) => (
                      <ActionRow
                        key={action.position}
                        $selected={index === selected}
                        onClick={() => setSelected(index)}
                      >
                        <td>{action.position}</td>
                        <td>{action.day}</td>
                        <td>{action.content}</td>
                      </ActionRow>
                    ))}
                  </tbody>
                </Table>
              </ListBox>
            </TabBody>
          </StrategyPanel>
        </Body>
      </Frame>
    </Window>
  )
}

export default App
